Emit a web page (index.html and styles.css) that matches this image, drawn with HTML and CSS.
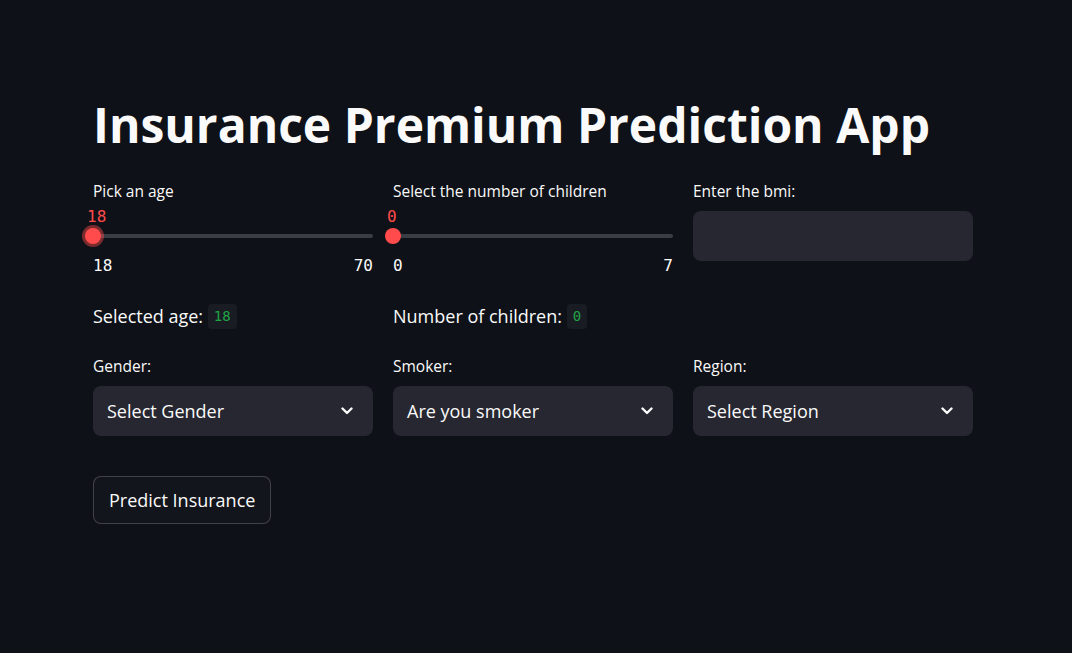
FILE: index.html
```html
<!DOCTYPE html>
<html>
<head>
<meta charset="utf-8">
<link rel="stylesheet" href="styles.css">
</head>
<body>
<main class="main">
  <h1 class="title">Insurance Premium Prediction App</h1>

  <div class="row row-inputs">
    <div class="col">
      <div class="label">Pick an age</div>
      <div class="slider">
        <div class="slider-value"><span class="val" style="left:0%">18</span></div>
        <div class="track-wrap">
          <div class="track"></div>
          <div class="thumb focused" style="left:0%"></div>
        </div>
        <div class="ticks"><span>18</span><span>70</span></div>
      </div>
    </div>
    <div class="col">
      <div class="label">Select the number of children</div>
      <div class="slider">
        <div class="slider-value"><span class="val" style="left:0%">0</span></div>
        <div class="track-wrap">
          <div class="track"></div>
          <div class="thumb" style="left:0%"></div>
        </div>
        <div class="ticks"><span>0</span><span>7</span></div>
      </div>
    </div>
    <div class="col">
      <div class="label">Enter the bmi:</div>
      <div class="text-input"></div>
    </div>
  </div>

  <div class="row row-text">
    <div class="col"><p class="md">Selected age: <code>18</code></p></div>
    <div class="col"><p class="md">Number of children: <code>0</code></p></div>
    <div class="col"></div>
  </div>

  <div class="row row-selects">
    <div class="col">
      <div class="label">Gender:</div>
      <div class="select"><span>Select Gender</span>
        <svg class="chev" viewBox="0 0 12 8" width="12" height="8"><polyline points="1.5,1.5 6,6 10.5,1.5" fill="none" stroke="#fafafa" stroke-width="2.4" stroke-linecap="round" stroke-linejoin="round"/></svg>
      </div>
    </div>
    <div class="col">
      <div class="label">Smoker:</div>
      <div class="select"><span>Are you smoker</span>
        <svg class="chev" viewBox="0 0 12 8" width="12" height="8"><polyline points="1.5,1.5 6,6 10.5,1.5" fill="none" stroke="#fafafa" stroke-width="2.4" stroke-linecap="round" stroke-linejoin="round"/></svg>
      </div>
    </div>
    <div class="col">
      <div class="label">Region:</div>
      <div class="select"><span>Select Region</span>
        <svg class="chev" viewBox="0 0 12 8" width="12" height="8"><polyline points="1.5,1.5 6,6 10.5,1.5" fill="none" stroke="#fafafa" stroke-width="2.4" stroke-linecap="round" stroke-linejoin="round"/></svg>
      </div>
    </div>
  </div>

  <button class="btn">Predict Insurance</button>
</main>
</body>
</html>
```
FILE: styles.css
```css
html, body {
  margin: 0;
  padding: 0;
  background: #0e1117;
  color: #fafafa;
  font-family: "Open Sans", "Noto Sans", sans-serif;
}
.main {
  width: 880px;
  padding: 95px 0 0 93px;
}
.title {
  margin: 0;
  font-size: 48px;
  line-height: 60px;
  font-weight: 700;
  letter-spacing: 0;
  color: #fafafa;
}
.row {
  display: grid;
  grid-template-columns: 280px 280px 280px;
  column-gap: 20px;
}
.row-inputs { margin-top: 26px; }
.label {
  font-size: 15.5px;
  line-height: 20px;
  height: 20px;
}
.slider { position: relative; }
.slider-value {
  position: relative;
  height: 20px;
  margin-top: 5px;
}
.val {
  position: absolute;
  top: 1px;
  margin-left: -6px;
  font-family: "DejaVu Sans Mono", monospace;
  font-size: 16px;
  line-height: 20px;
  color: #ff4b4b;
}
.track-wrap {
  position: relative;
  height: 20px;
}
.track {
  position: absolute;
  left: 0;
  right: 0;
  top: 8px;
  height: 4px;
  border-radius: 2px;
  background: #3b3d45;
}
.thumb {
  position: absolute;
  top: 2px;
  width: 16px;
  height: 16px;
  margin-left: -8px;
  border-radius: 50%;
  background: #ff4b4b;
}
.thumb.focused {
  box-shadow: 0 0 0 3px rgba(255, 75, 75, 0.45);
}
.ticks {
  display: flex;
  justify-content: space-between;
  margin-top: 10px;
  font-family: "DejaVu Sans Mono", monospace;
  font-size: 16px;
  line-height: 20px;
}
.text-input {
  margin-top: 10px;
  height: 50px;
  border-radius: 8px;
  background: #262730;
}
.row-text { margin-top: 28px; }
.md {
  margin: 0;
  font-size: 18px;
  line-height: 25px;
  display: flex;
  align-items: center;
  white-space: pre;
}
code {
  font-family: "DejaVu Sans Mono", monospace;
  font-size: 14px;
  color: #21a446;
  background: #1a1c24;
  border-radius: 4px;
  padding: 0 6px;
  line-height: 25px;
  margin-left: 0;
}
.row-selects { margin-top: 27px; }
.select {
  margin-top: 10px;
  height: 50px;
  border-radius: 8px;
  background: #262730;
  display: flex;
  align-items: center;
  justify-content: space-between;
  padding: 0 20px 0 14px;
  font-size: 18px;
}
.chev { display: block; }
.btn {
  margin-top: 40px;
  height: 48px;
  padding: 0 15px;
  background: #13151c;
  color: #fafafa;
  border: 1px solid rgba(250, 250, 250, 0.2);
  border-radius: 8px;
  font-family: "Open Sans", "Noto Sans", sans-serif;
  font-size: 18px;
}
```
